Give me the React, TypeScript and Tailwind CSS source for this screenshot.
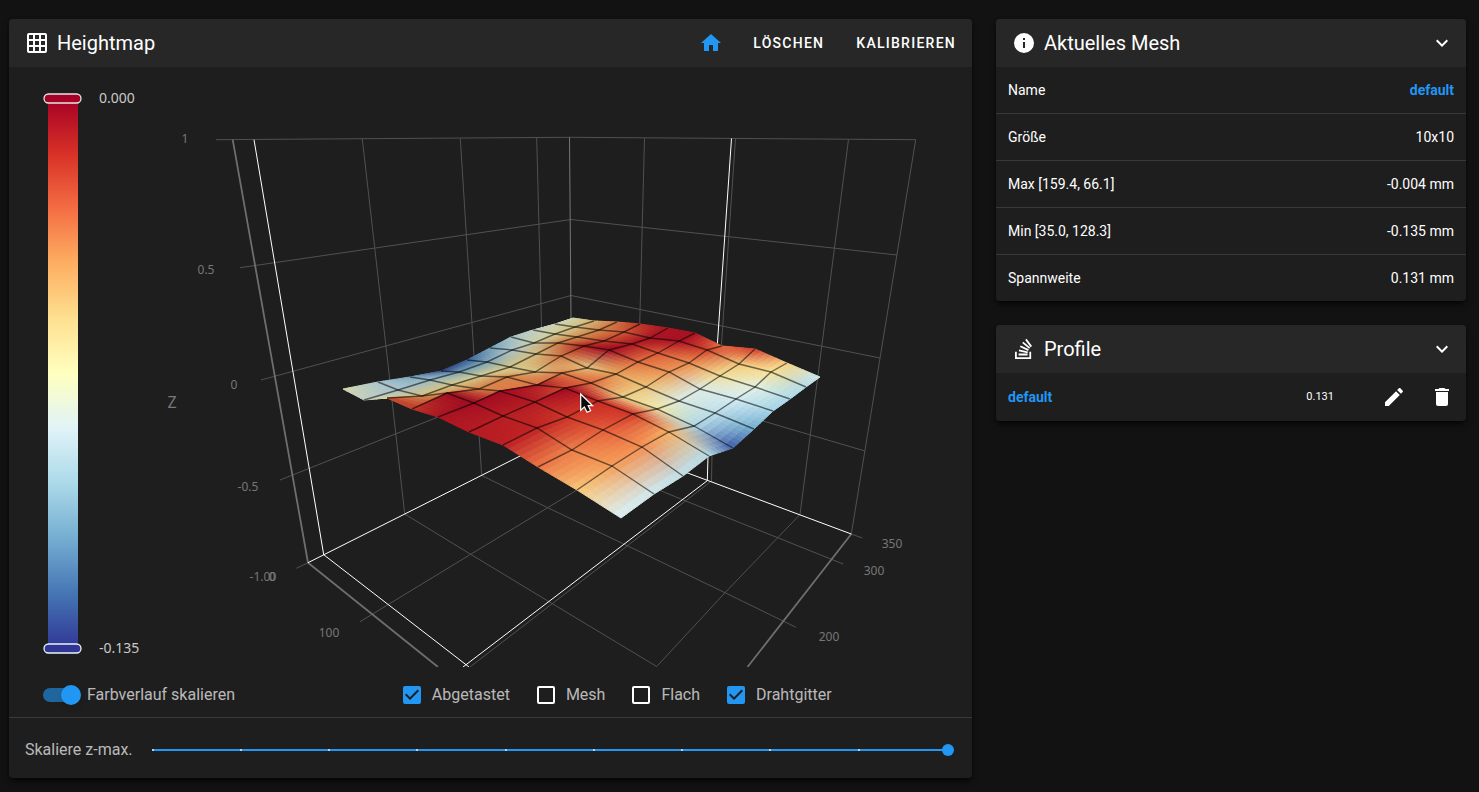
import type { ReactNode } from 'react';

const ICONS = {
  grid: 'M10,4V8H14V4H10M16,4V8H20V4H16M16,10V14H20V10H16M16,16V20H20V16H16M14,20V16H10V20H14M8,20V16H4V20H8M8,14V10H4V14H8M8,8V4H4V8H8M10,14H14V10H10V14M4,2H20A2,2 0 0,1 22,4V20A2,2 0 0,1 20,22H4C2.92,22 2,21.1 2,20V4A2,2 0 0,1 4,2Z',
  home: 'M10,20V14H14V20H19V12H22L12,3L2,12H5V20H10Z',
  info: 'M13,9H11V7H13M13,17H11V11H13M12,2A10,10 0 0,0 2,12A10,10 0 0,0 12,22A10,10 0 0,0 22,12A10,10 0 0,0 12,2Z',
  chevron: 'M7.41,8.58L12,13.17L16.59,8.58L18,10L12,16L6,10L7.41,8.58Z',
  stack: 'M17.36,20.2V14.82H19.15V22H3V14.82H4.8V20.2H17.36M6.77,14.32L7.14,12.56L15.93,14.41L15.56,16.17L6.77,14.32M7.93,10.11L8.69,8.5L16.83,12.28L16.07,13.9L7.93,10.11M10.19,6.12L11.34,4.74L18.24,10.5L17.09,11.87L10.19,6.12M14.64,1.87L20,9.08L18.56,10.15L13.2,2.94L14.64,1.87M6.59,18.41V16.61H15.57V18.41H6.59Z',
  pencil: 'M20.71,7.04C21.1,6.65 21.1,6 20.71,5.63L18.37,3.29C18,2.9 17.35,2.9 16.96,3.29L15.12,5.12L18.87,8.87M3,17.25V21H6.75L17.81,9.93L14.06,6.18L3,17.25Z',
  trash: 'M19,4H15.5L14.5,3H9.5L8.5,4H5V6H19M6,19A2,2 0 0,0 8,21H16A2,2 0 0,0 18,19V7H6V19Z',
};

function Icon({ name, className = '' }: { name: keyof typeof ICONS; className?: string }) {
  return (
    <svg viewBox="0 0 24 24" className={`size-6 shrink-0 fill-current ${className}`} aria-hidden="true">
      <path d={ICONS[name]} />
    </svg>
  );
}

const COLORS = ['#a50026', '#d73027', '#f46d43', '#fdae61', '#fee090', '#ffffbf', '#e0f3f8', '#abd9e9', '#74add1', '#4575b4', '#313695'];
const RGB = COLORS.map((c) => [1, 3, 5].map((k) => parseInt(c.slice(k, k + 2), 16)));

// screen position of every probed point, one row per x index, running back along y
const POINTS: [number, number][][] = [
  [[343, 389], [378, 382], [410, 377], [441, 371], [467, 360], [490, 348], [511, 337], [533, 330], [555, 324], [573, 318]],
  [[364, 400], [398, 390], [430, 380], [459, 372], [487, 362], [512, 350], [534, 343], [555, 334], [575, 327], [594, 321]],
  [[387, 398], [422, 396], [452, 385], [481, 376], [510, 367], [536, 354], [558, 343], [577, 337], [599, 330], [617, 322]],
  [[412, 409], [447, 393], [479, 389], [507, 377], [535, 372], [561, 356], [584, 346], [604, 341], [624, 332], [640, 324]],
  [[438, 417], [474, 403], [500, 391], [537, 385], [562, 373], [587, 368], [609, 350], [632, 344], [650, 338], [668, 328]],
  [[469, 432], [503, 416], [535, 402], [565, 388], [591, 383], [616, 374], [638, 362], [658, 353], [679, 341], [695, 333]],
  [[503, 445], [537, 428], [567, 417], [598, 401], [623, 397], [646, 387], [669, 372], [689, 363], [707, 350], [722, 346]],
  [[538, 467], [572, 450], [603, 430], [633, 414], [657, 409], [679, 401], [700, 389], [720, 376], [739, 364], [755, 349]],
  [[577, 490], [612, 466], [642, 447], [669, 432], [694, 426], [715, 413], [736, 399], [755, 387], [771, 372], [787, 363]],
  [[621, 518], [654, 494], [683, 476], [709, 456], [733, 448], [754, 429], [773, 411], [790, 399], [806, 387], [820, 377]],
];

// 0 = highest point of the mesh, 1 = lowest
const DEPTH = [
  [0.52, 0.65, 0.76, 0.97, 0.9, 0.76, 0.66, 0.58, 0.55, 0.53],
  [0.58, 0.64, 0.68, 0.77, 0.74, 0.62, 0.53, 0.48, 0.43, 0.38],
  [0.16, 0.38, 0.44, 0.48, 0.45, 0.42, 0.28, 0.3, 0.28, 0.25],
  [0.13, 0.04, 0.28, 0.27, 0.42, 0.24, 0.08, 0.16, 0.2, 0.12],
  [0.05, 0.03, 0.03, 0.05, 0.25, 0.4, 0.03, 0.06, 0.05, 0.05],
  [0.06, 0.07, 0.06, 0.02, 0.21, 0.3, 0.22, 0.18, 0.04, 0.04],
  [0.07, 0.08, 0.12, 0.1, 0.4, 0.37, 0.28, 0.26, 0.14, 0.22],
  [0.22, 0.24, 0.18, 0.12, 0.46, 0.58, 0.58, 0.43, 0.37, 0.12],
  [0.36, 0.28, 0.26, 0.32, 0.68, 0.66, 0.61, 0.57, 0.42, 0.38],
  [0.61, 0.63, 0.66, 0.68, 0.94, 0.8, 0.71, 0.69, 0.68, 0.64],
];

// points on the ridge, as seen by the cells lying behind it
const RIDGE: Record<string, number> = { '2,0': 0.5, '2,1': 0.42, '3,1': 0.3, '4,2': 0.24, '4,3': 0.24, '5,3': 0.16 };

// light per x index
const LIGHT = [0.86, 0.84, 0.84, 0.86, 0.9, 0.92, 0.94, 0.96, 0.98, 1];
const STEPS = 6;

function vertexColor(depth: number, light: number) {
  const t = Math.min(0.9999, Math.max(0, depth)) * 10;
  const k = Math.floor(t);
  return RGB[k].map((v, n) => (v + (RGB[k + 1][n] - v) * (t - k)) * light);
}

function mix(a: number, b: number, c: number, d: number, u: number, v: number) {
  return a * (1 - u) * (1 - v) + b * u * (1 - v) + c * u * v + d * (1 - u) * v;
}

function Cell({ i, j }: { i: number; j: number }) {
  const q = [POINTS[i][j], POINTS[i + 1][j], POINTS[i + 1][j + 1], POINTS[i][j + 1]];
  const c = [
    vertexColor(DEPTH[i][j], LIGHT[i]),
    vertexColor(RIDGE[`${i + 1},${j}`] ?? DEPTH[i + 1][j], LIGHT[i + 1]),
    vertexColor(RIDGE[`${i + 1},${j + 1}`] ?? DEPTH[i + 1][j + 1], LIGHT[i + 1]),
    vertexColor(DEPTH[i][j + 1], LIGHT[i]),
  ];
  const at = (u: number, v: number) =>
    [0, 1].map((n) => mix(q[0][n], q[1][n], q[2][n], q[3][n], u / STEPS, v / STEPS).toFixed(2)).join(',');
  const tiles = [];
  for (let v = STEPS - 1; v >= 0; v--) {
    for (let u = 0; u < STEPS; u++) {
      const rgb = [0, 1, 2].map((n) =>
        Math.round(mix(c[0][n], c[1][n], c[2][n], c[3][n], (u + 0.5) / STEPS, (v + 0.5) / STEPS))
      );
      const fill = `rgb(${rgb.join(',')})`;
      tiles.push(
        <polygon
          key={`${u}-${v}`}
          points={`${at(u, v)} ${at(u + 1, v)} ${at(u + 1, v + 1)} ${at(u, v + 1)}`}
          fill={fill}
          stroke={fill}
          strokeWidth={1}
          strokeLinejoin="round"
        />
      );
    }
  }
  return <g>{tiles}</g>;
}

function Surface() {
  const cells = [];
  for (let i = 0; i < 9; i++) {
    for (let j = 8; j >= 0; j--) cells.push(<Cell key={`${i}-${j}`} i={i} j={j} />);
  }
  const inner = [1, 2, 3, 4, 5, 6, 7, 8];
  return (
    <g>
      {cells}
      <g fill="none" stroke="#000" strokeOpacity={0.55} strokeWidth={1.4}>
        {inner.map((k) => (
          <polyline key={`x${k}`} points={POINTS[k].map((p) => p.join(',')).join(' ')} />
        ))}
        {inner.map((k) => (
          <polyline key={`y${k}`} points={POINTS.map((row) => row[k].join(',')).join(' ')} />
        ))}
      </g>
    </g>
  );
}

const GRID_LINES = [
  'M216 139.7L569.5 137.3L915.7 139.7',
  'M240 267.7L571 219.5L897 255',
  'M261 380L571 295.5L880 358',
  'M280 480L438 417',
  'M763 421L865 451',
  'M362.3 139L389.7 379L404.7 514L470.7 554.3L551.7 603.3L656.7 666.5',
  'M460.3 138.5L474 356L481.7 475.5L547.7 507.7L627.3 545.7L725 592.7L796 627.3',
  'M536.7 138L541.7 333',
  'M644.5 138L639.7 325',
  'M735.5 138.5L721.3 347',
  'M848.5 139.5L800 514.5L777.7 537.7L725 592.7L656.7 666.5',
  'M915.7 139.7L851.3 534L862.3 538',
  'M660.7 490.7L685.7 501L777.7 537.7L830.7 559L843.3 564',
  'M360 621.7L470.7 554.3L547.7 507.7L590 482',
  'M296.3 568.3L308 562.7',
  'M712 456L711.5 481L470 667',
];

const AXIS_LABELS: [number, number, string][] = [
  [185, 143, '1'],
  [206, 274, '0.5'],
  [234, 389, '0'],
  [248, 491, '-0.5'],
  [260, 581, '-1.0'],
  [273, 581, '0'],
  [272, 581, '0'],
  [329, 637, '100'],
  [829, 641, '200'],
  [874, 575, '300'],
  [892, 548, '350'],
];

function HeightmapChart() {
  return (
    <svg viewBox="9 67 963 600" className="block w-full font-['Noto_Sans',sans-serif]">
      <defs>
        <linearGradient id="scale" x1="0" y1="0" x2="0" y2="1">
          {COLORS.map((c, k) => (
            <stop key={c} offset={k / 10} stopColor={c} />
          ))}
        </linearGradient>
      </defs>

      <rect x={48} y={98} width={30} height={551} fill="url(#scale)" />
      <rect x={44} y={94} width={37} height={9} rx={4.5} fill="#a50026" stroke="#e6e6e6" strokeWidth={1.3} />
      <rect x={44} y={644} width={37} height={9} rx={4.5} fill="#313695" stroke="#e6f5fa" strokeWidth={1.3} />
      <g fill="#c9c9c9" fontSize={14}>
        <text x={99} y={103}>0.000</text>
        <text x={99} y={653}>-0.135</text>
      </g>

      <g fill="none">
        <path d={GRID_LINES.join('')} stroke="#515151" />
        <path d="M569.5 137.3L571 319" stroke="#777" />
        <path d="M232.7 139.7L308 562.7L438 667M851.3 534L747.5 667" stroke="#6e6e6e" strokeWidth={1.8} />
        <path
          d="M254 139.7L323.7 554.7L469 667M463 667L707.3 480.7M708 456L707.3 480.7M731.5 138.5L717.3 345M308 562.7L530 451M685 472L851.3 534"
          stroke="#fff"
        />
      </g>

      <Surface />

      <g fill="#777" fontSize={12} textAnchor="middle">
        {AXIS_LABELS.map(([x, y, text]) => (
          <text key={`${x}-${y}`} x={x} y={y}>{text}</text>
        ))}
        <text x={172} y={408} fontSize={16}>Z</text>
      </g>

      {/* mouse pointer */}
      <path
        d="M580.7 394V410.3L584.4 407L587 412.3L590.6 410.8L588.2 405.7H592.6Z"
        fill="#0a0a0a"
        stroke="#fff"
        strokeWidth={1.2}
      />
    </svg>
  );
}

function Panel({ icon, title, actions, children }: { icon: keyof typeof ICONS; title: string; actions: ReactNode; children: ReactNode }) {
  return (
    <section className="overflow-hidden rounded bg-[#1e1e1e] shadow-md shadow-black/60">
      <header className="flex h-12 items-center justify-between bg-[#272727]">
        <div className="flex items-center gap-2 pl-4">
          <Icon name={icon} />
          <h2 className="text-xl">{title}</h2>
        </div>
        <div className="flex items-center">{actions}</div>
      </header>
      {children}
    </section>
  );
}

function CollapseButton() {
  return (
    <button className="mr-3" aria-label="Einklappen">
      <Icon name="chevron" />
    </button>
  );
}

function Checkbox({ label, checked = false }: { label: string; checked?: boolean }) {
  return (
    <label className="flex items-center gap-[11px]">
      <span className="relative flex">
        <input
          type="checkbox"
          defaultChecked={checked}
          className="peer size-[18px] appearance-none rounded-xs border-2 border-white checked:border-[#2196f3] checked:bg-[#2196f3]"
        />
        <svg viewBox="3 3 18 18" className="pointer-events-none absolute inset-0 hidden size-[18px] fill-[#1e1e1e] peer-checked:block">
          <path d="M10,17L5,12L6.41,10.58L10,14.17L17.59,6.58L19,8" />
        </svg>
      </span>
      {label}
    </label>
  );
}

const MESH_INFO = [
  ['Name', 'default'],
  ['Größe', '10x10'],
  ['Max [159.4, 66.1]', '-0.004 mm'],
  ['Min [35.0, 128.3]', '-0.135 mm'],
  ['Spannweite', '0.131 mm'],
];

export default function App() {
  return (
    <main className="grid min-h-screen grid-cols-[963fr_470fr] items-start gap-6 bg-[#121212] pt-[19px] pr-[13px] pb-3 pl-[9px] font-[Roboto,sans-serif] text-white">
      <Panel
        icon="grid"
        title="Heightmap"
        actions={
          <>
            <button className="px-[14px] text-[#2196f3]" aria-label="Ansicht zurücksetzen">
              <Icon name="home" />
            </button>
            <button className="px-4 text-sm font-medium tracking-[0.09em] uppercase">Löschen</button>
            <button className="px-4 text-sm font-medium tracking-[0.09em] uppercase">Kalibrieren</button>
          </>
        }
      >
        <HeightmapChart />
        <div className="flex h-[50px] items-center pt-[6px] text-base text-white/70">
          <div className="w-[41%] pl-[34px]">
            <label className="flex items-center gap-[6px]">
              <span className="relative flex h-5 w-[38px] items-center">
                <input
                  type="checkbox"
                  role="switch"
                  defaultChecked
                  className="peer h-[14px] w-9 appearance-none rounded-full bg-white/30 checked:bg-[#2196f3]/60"
                />
                <span className="pointer-events-none absolute left-0 size-5 rounded-full bg-gray-400 shadow-md peer-checked:left-[18px] peer-checked:bg-[#2196f3]" />
              </span>
              Farbverlauf skalieren
            </label>
          </div>
          <div className="-ml-px flex items-center gap-[27px]">
            <Checkbox label="Abgetastet" checked />
            <Checkbox label="Mesh" />
            <Checkbox label="Flach" />
            <Checkbox label="Drahtgitter" checked />
          </div>
        </div>
        <div className="flex h-[61px] items-center gap-[13px] border-t border-white/12 pt-1 pr-[18px] pl-4 text-base text-white/70">
          <label htmlFor="zmax">Skaliere z-max.</label>
          <div className="relative flex h-3 flex-1 items-center">
            <div className="absolute inset-x-[6px] flex h-[2px] justify-between bg-[#2196f3]">
              {Array.from({ length: 10 }, (_, k) => (
                <span key={k} className="size-[2px] bg-white/60" />
              ))}
            </div>
            <input
              id="zmax"
              type="range"
              min={1}
              max={10}
              defaultValue={10}
              className="relative h-3 w-full appearance-none bg-transparent [&::-webkit-slider-thumb]:size-3 [&::-webkit-slider-thumb]:appearance-none [&::-webkit-slider-thumb]:rounded-full [&::-webkit-slider-thumb]:bg-[#2196f3]"
            />
          </div>
        </div>
      </Panel>

      <div className="flex flex-col gap-6">
        <Panel icon="info" title="Aktuelles Mesh" actions={<CollapseButton />}>
          <table className="w-full border-separate border-spacing-0 text-sm">
            <tbody>
              {MESH_INFO.map(([name, value]) => (
                <tr key={name} className="group">
                  <th className="h-[47px] border-b border-white/12 px-3 text-left font-normal group-last:h-[46px] group-last:border-b-0">
                    {name}
                  </th>
                  <td className="border-b border-white/12 px-3 text-right group-first:font-bold group-first:text-[#2196f3] group-last:border-b-0">
                    {value}
                  </td>
                </tr>
              ))}
            </tbody>
          </table>
        </Panel>

        <Panel icon="stack" title="Profile" actions={<CollapseButton />}>
          <div className="flex h-12 items-center px-3">
            <a href="#default" className="flex-1 text-sm font-bold text-[#2196f3]">default</a>
            <span className="mr-12 text-[11px]">0.131</span>
            <button className="mr-6" aria-label="Umbenennen">
              <Icon name="pencil" />
            </button>
            <button aria-label="Löschen">
              <Icon name="trash" />
            </button>
          </div>
        </Panel>
      </div>
    </main>
  );
}
